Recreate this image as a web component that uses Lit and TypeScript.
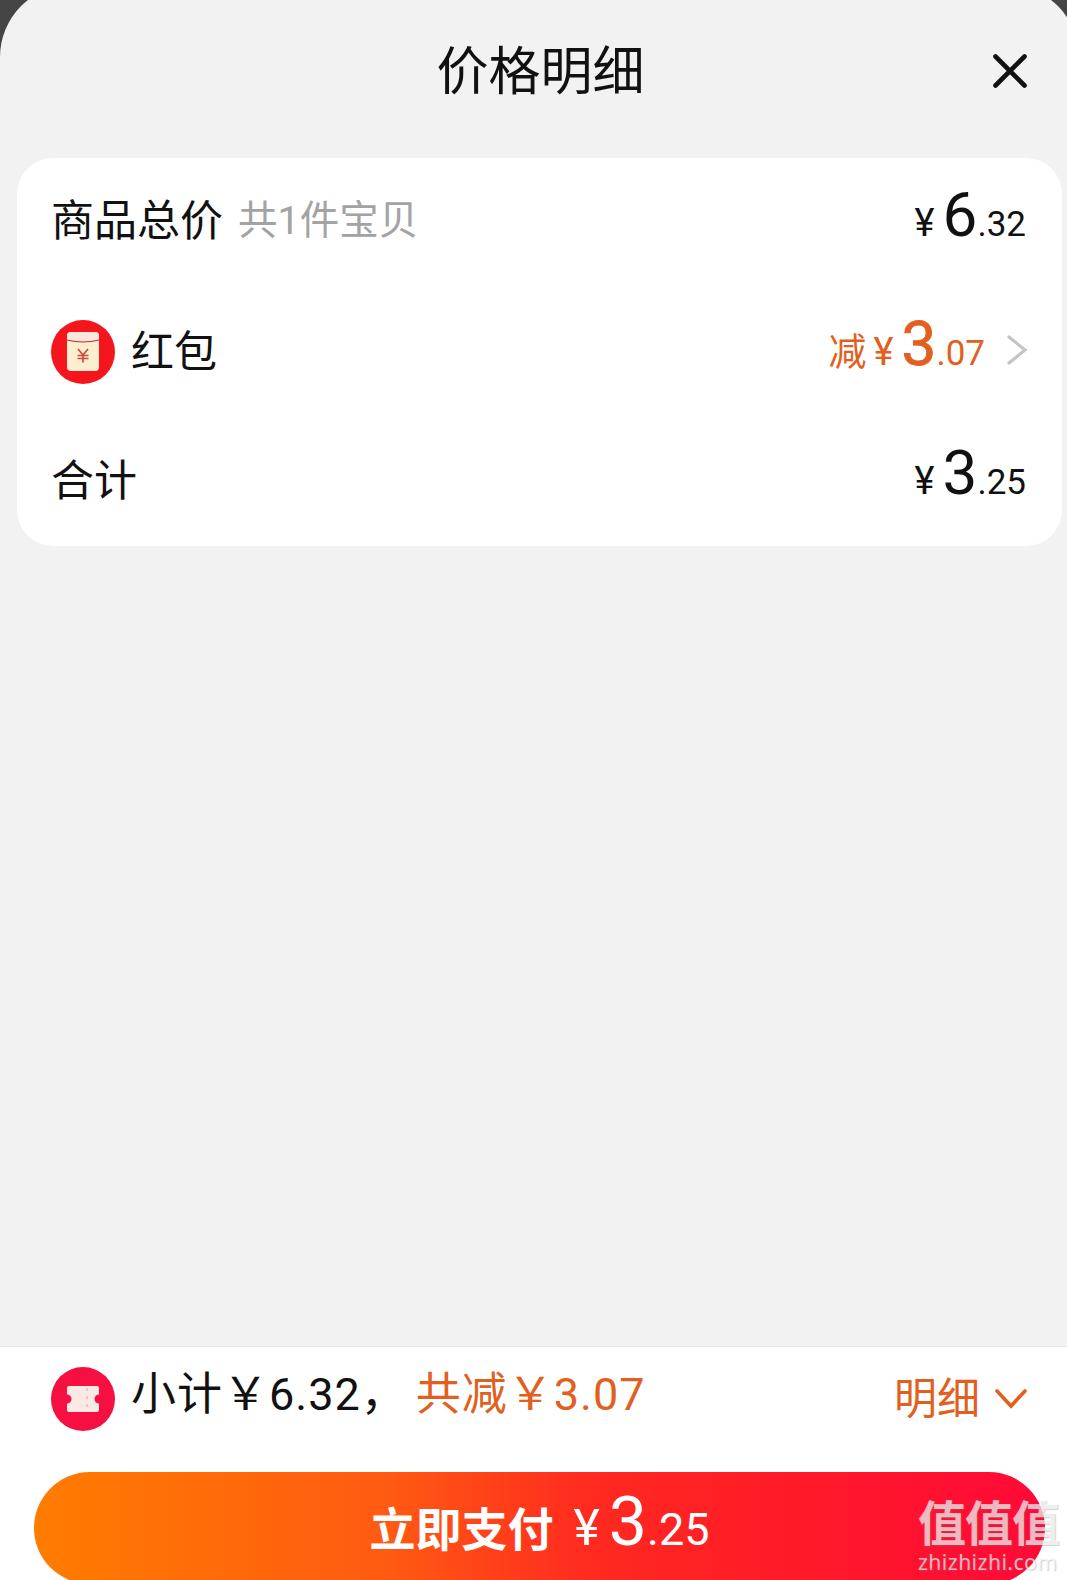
import { LitElement, html, css } from "lit";
import { customElement } from "lit/decorators.js";

@customElement("app-root")
export class AppRoot extends LitElement {
  static styles = css`
    :host {
      display: block;
      position: relative;
      width: 1067px;
      height: 1580px;
      overflow: hidden;
      background: #454545;
      font-family: "Roboto", "Noto Sans CJK SC", sans-serif;
      color: #111;
    }
    .sheet {
      width: 1079px;
      height: 1595px;
      margin-top: -15px;
      box-sizing: border-box;
      border-radius: 72px 72px 0 0;
      background: #f2f2f2;
      display: flex;
      flex-direction: column;
    }
    .header {
      height: 173px;
      box-sizing: border-box;
      flex: none;
      display: flex;
      align-items: center;
      justify-content: center;
      position: relative;
      padding: 2px 0 0 2px;
    }
    .title {
      font-size: 52px;
      line-height: 72px;
    }
    .close {
      position: absolute;
      right: 52px;
      top: 69px;
      width: 34px;
      height: 34px;
    }
    .card {
      flex: none;
      margin: 0 17px;
      height: 388px;
      background: #fff;
      border-radius: 36px;
      padding: 0 36px 0 34px;
      display: flex;
      flex-direction: column;
    }
    .row {
      flex: 1;
      display: flex;
      align-items: center;
      justify-content: space-between;
    }
    .left {
      display: flex;
      align-items: center;
      font-size: 43px;
      line-height: 60px;
    }
    .left.first { margin-bottom: 4px; }
    .sub {
      font-size: 39.5px;
      color: #a3a3a3;
      margin-left: 15px;
    }
    .badge {
      width: 64px;
      height: 64px;
      margin-right: 16px;
      flex: none;
    }
    .price {
      display: flex;
      align-items: baseline;
      line-height: 60px;
    }
    .row .price { padding-bottom: 6px; }
    .y { font-size: 38px; margin-right: 8px; }
    .big { font-size: 62px; }
    .dec { font-size: 35px; }
    .accent { color: #e2601f; }
    .accent .big { -webkit-text-stroke: 0.8px #e2601f; }
    .cut { font-size: 38px; margin-right: 7px; }
    .chev { width: 22px; height: 30px; margin-left: 21px; flex: none; margin-bottom: 4px; }
    .right { display: flex; align-items: center; margin-right: -2px; }
    .spacer { flex: 1; }
    .footer {
      flex: none;
      height: 234px;
      box-sizing: border-box;
      background: #fff;
      border-top: 1px solid #e9e9e9;
      display: flex;
      flex-direction: column;
    }
    .summary {
      height: 124px;
      flex: none;
      box-sizing: border-box;
      padding: 0 52px 20px 51px;
      display: flex;
      align-items: center;
    }
    .sumtext, .sumcut {
      font-size: 45px;
      line-height: 60px;
      letter-spacing: 1px;
      margin-top: -8px;
    }
    .sumcut { margin-left: 9px; color: #e2601f; }
    .detail {
      margin-left: auto;
      display: flex;
      align-items: center;
      font-size: 43px;
      color: #e2601f;
      line-height: 60px;
    }
    .down { width: 32px; height: 20px; margin-left: 15px; }
    .pay {
      flex: none;
      margin: 1px 34px 0;
      height: 112px;
      border-radius: 56px;
      background: linear-gradient(90deg, #ff7c00 0%, #ff5a12 35%, #ff2a20 55%, #ff1a28 75%, #ff0a38 100%);
      color: #fff;
      display: flex;
      align-items: center;
      justify-content: center;
      padding-bottom: 4px;
      box-sizing: border-box;
    }
    .paylabel { font-size: 46px; font-weight: 700; margin-right: 20px; }
    .pay .y { font-size: 50px; margin-right: 9px; }
    .pay .big { font-size: 68px; }
    .pay .dec { font-size: 45px; }
    .mark {
      position: absolute;
      left: 918px;
      top: 1499px;
      width: 149px;
      color: rgba(255, 255, 255, 0.68);
      text-shadow: 1px 1px 1px rgba(120, 120, 120, 0.35);
    }
    .mark .cn {
      font-size: 48px;
      font-weight: 700;
      line-height: 52px;
      letter-spacing: -1px;
    }
    .mark .en {
      font-size: 21px;
      line-height: 22px;
      letter-spacing: 0.5px;
      font-family: "Noto Sans", sans-serif;
    }
  `;

  private price(big: string, dec: string) {
    return html`<span class="y">¥</span><span class="big">${big}</span><span class="dec">${dec}</span>`;
  }

  render() {
    return html`
      <div class="sheet">
        <div class="header">
          <div class="title">价格明细</div>
          <svg class="close" viewBox="0 0 34 34" fill="none" stroke="#111" stroke-width="4.6" stroke-linecap="round">
            <path d="M2.5 2.5 L31.5 31.5 M31.5 2.5 L2.5 31.5" />
          </svg>
        </div>
        <div class="card">
          <div class="row">
            <div class="left first">商品总价<span class="sub">共1件宝贝</span></div>
            <div class="price">${this.price("6", ".32")}</div>
          </div>
          <div class="row">
            <div class="left">
              <svg class="badge" viewBox="0 0 64 64">
                <circle cx="32" cy="32" r="32" fill="#f5161d" />
                <rect x="16" y="12" width="32" height="39" rx="4" fill="#fdeed0" />
                <path d="M16 16 a4 4 0 0 1 4 -4 h24 a4 4 0 0 1 4 4 v4 q-16 4 -32 0z" fill="#fbe6dc" />
                <path d="M16 20 q16 4 32 0" fill="none" stroke="#c9282a" stroke-width="1.1" />
                <path d="M27 29 l5 6 l5 -6 M26.500 35.500 h11 M26.500 38.500 h11 M32 35 v7.500" fill="none" stroke="#cf4a38" stroke-width="1.7" />
              </svg>
              红包
            </div>
            <div class="right">
              <div class="price accent">
                <span class="cut">减</span>${this.price("3", ".07")}
              </div>
              <svg class="chev" viewBox="0 0 22 30" fill="none" stroke="#c4c4c4" stroke-width="3.2" stroke-linecap="round">
                <path d="M3 2 L19 15 L3 28" />
              </svg>
            </div>
          </div>
          <div class="row">
            <div class="left">合计</div>
            <div class="price">${this.price("3", ".25")}</div>
          </div>
        </div>
        <div class="spacer"></div>
        <div class="footer">
          <div class="summary">
            <svg class="badge" viewBox="0 0 64 64">
              <circle cx="32" cy="32" r="32" fill="#f60f41" />
              <path d="M16 21 a2 2 0 0 1 2 -2 h28 a2 2 0 0 1 2 2 v6.500 a4.500 4.500 0 0 0 0 9 v6.500 a2 2 0 0 1 -2 2 h-28 a2 2 0 0 1 -2 -2 v-6.500 a4.500 4.500 0 0 0 0 -9z" fill="#fbe9e4" />
              <path d="M36 21 v22" stroke="#e9c9bd" stroke-width="2" stroke-dasharray="3 5" fill="none" />
            </svg>
            <span class="sumtext">小计￥6.32，</span>
            <span class="sumcut">共减￥3.07</span>
            <div class="detail">
              明细
              <svg class="down" viewBox="0 0 32 20" fill="none" stroke="#e2601f" stroke-width="3.6" stroke-linecap="round">
                <path d="M2 2 L16 17 L30 2" />
              </svg>
            </div>
          </div>
          <div class="pay">
            <span class="paylabel">立即支付</span>
            <div class="price">${this.price("3", ".25")}</div>
          </div>
        </div>
      </div>
      <div class="mark">
        <div class="cn">值值值</div>
        <div class="en">zhizhizhi.com</div>
      </div>
    `;
  }
}
